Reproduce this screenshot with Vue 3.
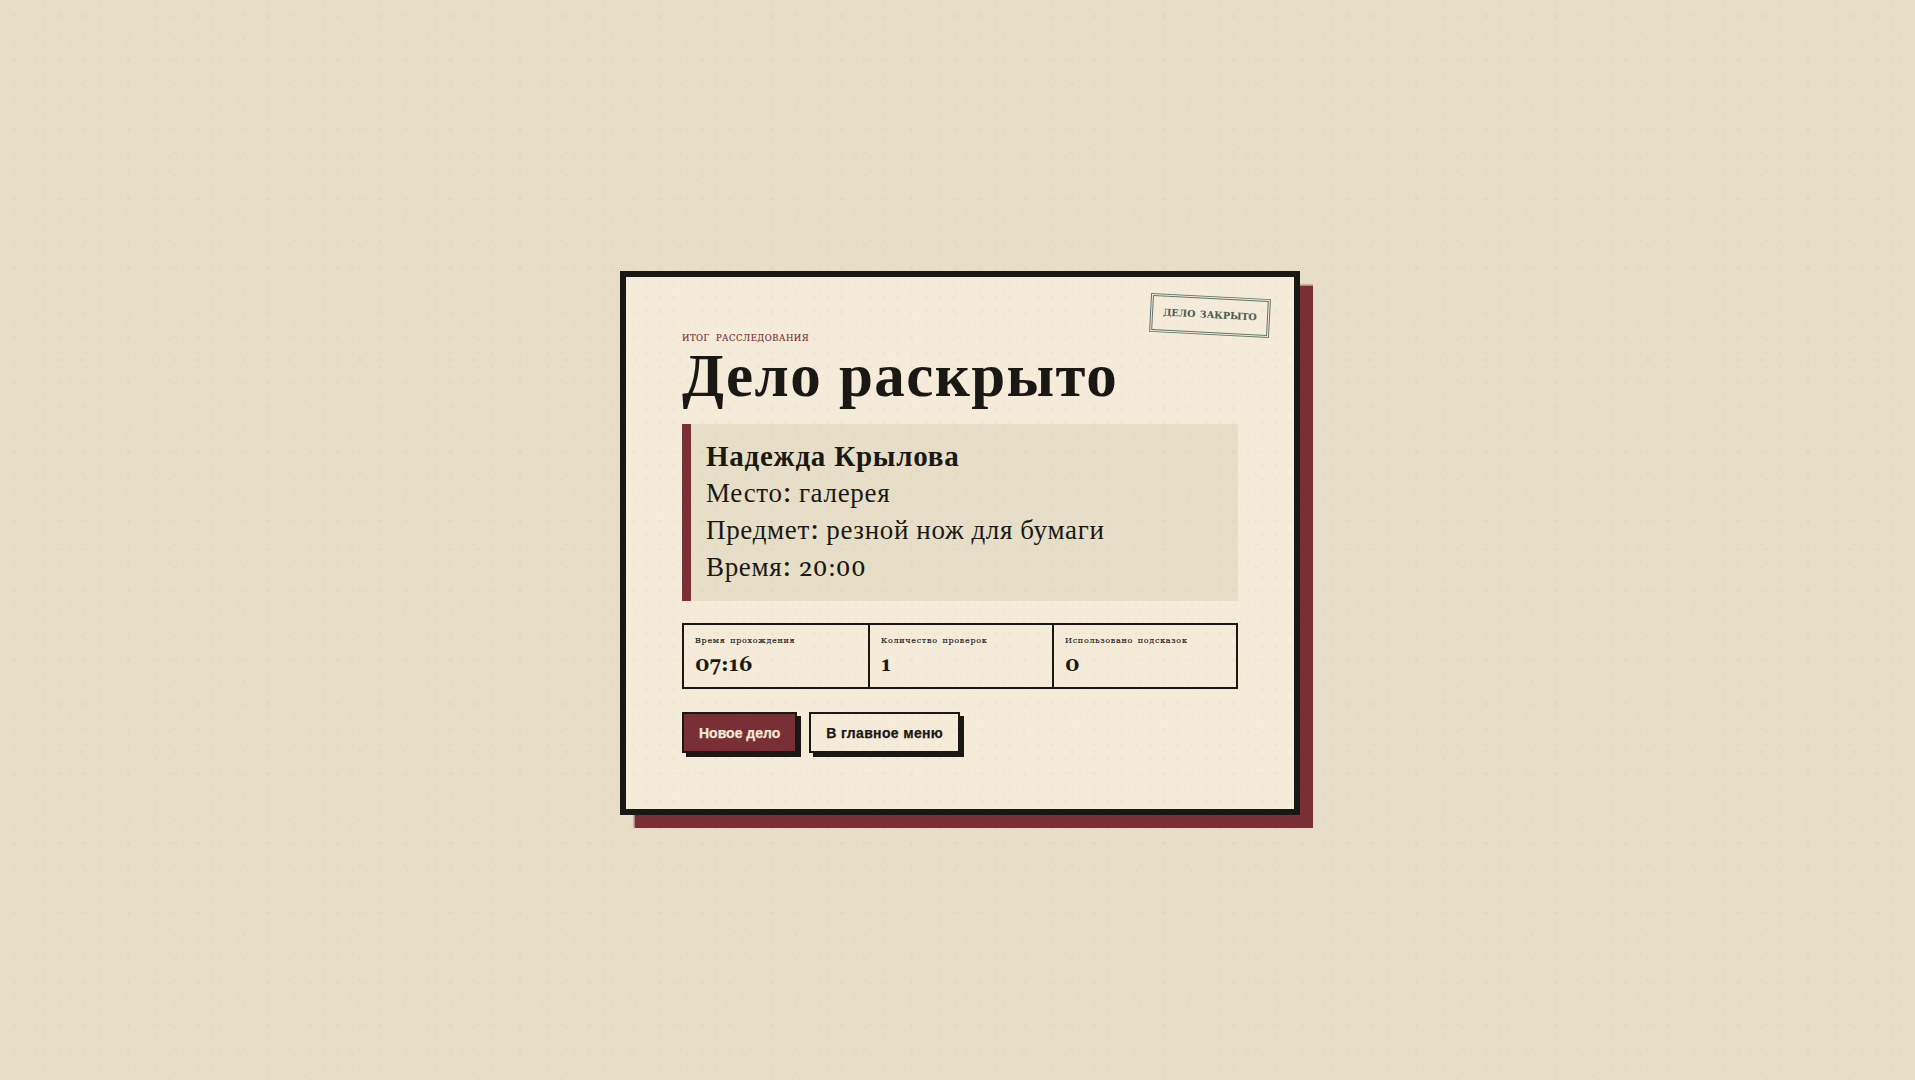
<script setup>
const stats = [
  { label: 'Время прохождения', value: '07:16' },
  { label: 'Количество проверок', value: '1' },
  { label: 'Использовано подсказок', value: '0' },
]
</script>

<template>
  <main class="stage">
    <section class="card">
      <div class="stamp">ДЕЛО ЗАКРЫТО</div>
      <p class="eyebrow">ИТОГ РАССЛЕДОВАНИЯ</p>
      <h1 class="title">Дело раскрыто</h1>
      <div class="verdict">
        <strong class="name">Надежда Крылова</strong>
        <span>Место: галерея</span>
        <span>Предмет: резной нож для бумаги</span>
        <span>Время: <span class="digits">20:00</span></span>
      </div>
      <div class="stats">
        <div v-for="s in stats" :key="s.label" class="stat">
          <span class="stat-label">{{ s.label }}</span>
          <span class="stat-value">{{ s.value }}</span>
        </div>
      </div>
      <div class="actions">
        <button class="btn primary">Новое дело</button>
        <button class="btn secondary">В главное меню</button>
      </div>
    </section>
    <div class="dots"></div>
  </main>
</template>

<style scoped>
.stage {
  position: relative;
  min-height: 1080px;
  box-sizing: border-box;
  padding: 6px 0 0 5px;
  display: flex;
  align-items: center;
  justify-content: center;
  background: #e7dec7;
  font-family: Georgia, Gelasio, "Liberation Serif", serif;
  color: #1a1814;
  overflow: hidden;
}
.dots {
  position: absolute;
  inset: 0;
  pointer-events: none;
  background-image:
    radial-gradient(circle at 2px 3px, rgba(26, 24, 20, 0.02) 1.5px, transparent 2px),
    radial-gradient(circle at 14px 15px, rgba(26, 24, 20, 0.012) 1.5px, transparent 2px);
  background-size: 14px 14px, 23px 23px;
}
.card {
  position: relative;
  width: 680px;
  height: 544px;
  box-sizing: border-box;
  border: 6px solid #1a1814;
  background: #f4ebd8;
  padding: 55px 56px 0;
  box-shadow: 12.5px 12.5px 1px #7a2e35;
}
.stamp {
  position: absolute;
  top: 19px;
  right: 24px;
  padding: 10px 10px 11px;
  border: 3px double #64786e;
  transform: rotate(3deg);
  font-family: "DejaVu Serif", serif;
  font-size: 9.5px;
  line-height: 12px;
  font-weight: 700;
  word-spacing: 1px;
  color: #4a5a54;
  white-space: nowrap;
}
.eyebrow {
  margin: 0;
  font-family: "DejaVu Serif", serif;
  font-size: 8.5px;
  line-height: 12px;
  letter-spacing: 0.5px;
  word-spacing: 3px;
  color: #7a2e35;
  -webkit-text-stroke: 0.15px currentColor;
}
.title {
  margin: 3px 0 15px;
  font-size: 61px;
  line-height: 62px;
  letter-spacing: 1.4px;
  font-weight: 700;
}
.verdict {
  display: flex;
  flex-direction: column;
  height: 177px;
  box-sizing: border-box;
  padding: 15px 15px 14px;
  border-left: 9px solid #7a2e35;
  background: #e7dec7;
  font-size: 27px;
  letter-spacing: 0.67px;
  line-height: 37px;
}
.name {
  font-size: 29px;
  letter-spacing: 0.75px;
  font-weight: 700;
}
.digits {
  font-size: 24.8px;
  letter-spacing: 0;
}
.stats {
  display: grid;
  grid-template-columns: repeat(3, 1fr);
  margin-top: 22px;
  height: 66px;
  box-sizing: border-box;
  border: 2px solid #1a1814;
}
.stat {
  display: flex;
  flex-direction: column;
  gap: 5px;
  padding: 10px 11px;
  border-left: 2px solid #1a1814;
}
.stat:first-child {
  border-left: 0;
}
.stat-label {
  font-family: "DejaVu Serif", serif;
  font-size: 8px;
  line-height: 12px;
  letter-spacing: 0.7px;
  word-spacing: 1.5px;
  -webkit-text-stroke: 0.15px currentColor;
}
.stat-value {
  font-size: 20.8px;
  line-height: 26px;
  font-weight: 700;
}
.actions {
  display: flex;
  gap: 12px;
  margin-top: 23px;
}
.btn {
  height: 41px;
  padding: 0 15px;
  border: 2px solid #1a1814;
  background: #f4ebd8;
  box-shadow: 4px 4px 0 #1a1814;
  font-family: "Liberation Sans", Arial, sans-serif;
  font-size: 14px;
  font-weight: 700;
  color: #1a1814;
  -webkit-text-stroke: 0.25px currentColor;
}
.primary {
  background: #7a2e35;
  color: #f4ebd8;
}
.secondary {
  letter-spacing: 0.35px;
}
</style>

<style>
body { margin: 0; }
</style>
